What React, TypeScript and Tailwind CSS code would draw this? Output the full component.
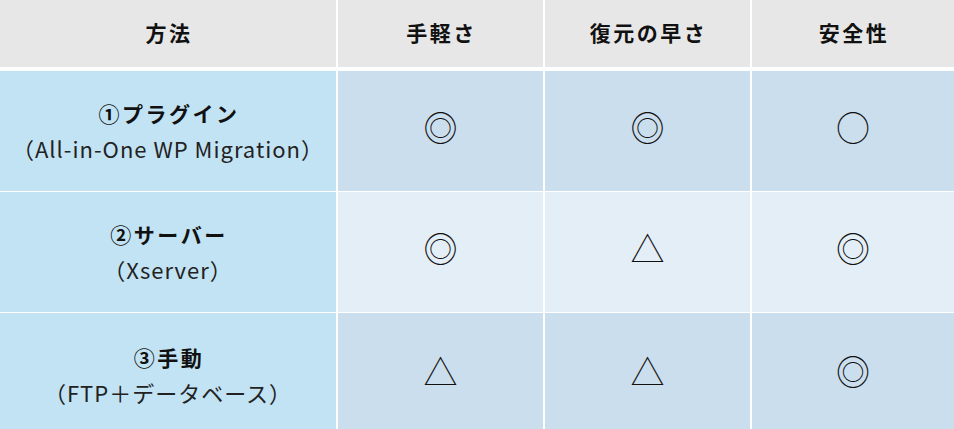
import React from "react";

const font = { fontFamily: '"Noto Sans CJK JP", "Noto Sans", sans-serif' };

const rows = [
  { title: "①プラグイン", sub: "（All-in-One WP Migration）", vals: ["◎", "◎", "○"], bg: "bg-[#cbdeed]" },
  { title: "②サーバー", sub: "（Xserver）", vals: ["◎", "△", "◎"], bg: "bg-[#e4eef7]" },
  { title: "③手動", sub: "（FTP＋データベース）", vals: ["△", "△", "◎"], bg: "bg-[#cbdeed]" },
];

export default function App() {
  return (
    <div className="w-[954px] h-[429px] bg-white overflow-hidden text-[#111]" style={font}>
      <div className="grid grid-cols-[336px_205px_205px_1fr] gap-x-[2px] h-[67px] bg-white">
        {["方法", "手軽さ", "復元の早さ", "安全性"].map((h) => (
          <div key={h} className="bg-[#e7e7e7] flex items-center justify-center pb-[2px] pl-[2px] text-[21px] font-bold tracking-[2.5px]">
            {h}
          </div>
        ))}
      </div>
      <div className="grid grid-cols-[336px_205px_205px_1fr] grid-rows-[120px_120px_124px] gap-x-[2px] gap-y-[1px] mt-[4px] bg-white">
        {rows.map((r) => (
          <React.Fragment key={r.title}>
            <div className="bg-[#c2e3f4] flex flex-col items-center justify-center">
              <div className="text-[21px] font-bold leading-[35px] tracking-[2.5px] pl-[2px]">{r.title}</div>
              <div className="text-[22px] leading-[35px] tracking-[1px] text-[#222]">{r.sub}</div>
            </div>
            {r.vals.map((v, i) => (
              <div key={i} className={`${r.bg} flex items-center justify-center pb-[8px]`}>
                <span className="text-[34px] leading-none font-light">{v}</span>
              </div>
            ))}
          </React.Fragment>
        ))}
      </div>
    </div>
  );
}
